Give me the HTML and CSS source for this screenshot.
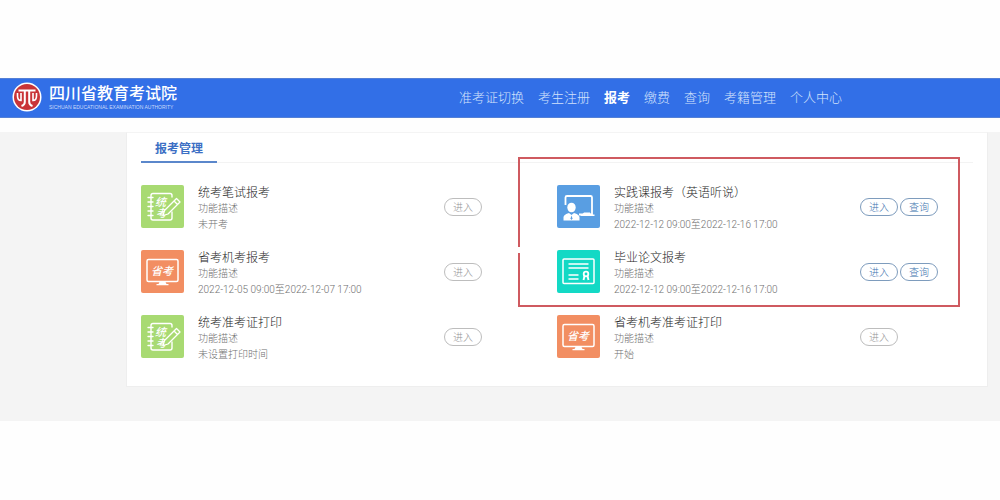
FILE: index.html
```html
<!DOCTYPE html>
<html lang="zh-CN">
<head>
<meta charset="utf-8">
<title>四川省教育考试院</title>
<link rel="stylesheet" href="styles.css">
</head>
<body>
<svg class="sprite" aria-hidden="true">
  <symbol id="notebook" viewBox="0 0 43 43">
    <g fill="none" stroke="#fff" stroke-width="1.4" stroke-linecap="round" stroke-linejoin="round">
      <path d="M31 12V10.500Q31 8.500 29 8.500H12Q10 8.500 10 10.500V33Q10 35 12 35H29Q31 35 31 33V27"/>
      <path d="M7 12.500h5M7 17h5M7 21.500h5M7 26h5M7 30.500h5"/>
    </g>
    <g class="script-text"><text x="14" y="21" font-size="11">统</text><text x="15" y="32" font-size="11">考</text></g>
    <path fill="#a8da72" stroke="#fff" stroke-width="1.300" stroke-linejoin="round" d="M35.500 13.500l3.500 3.500-12 12-5 1.500 1.500-5zM33 16l3.500 3.500"/>
  </symbol>
  <symbol id="monitor" viewBox="0 0 43 43">
    <rect x="6" y="9.500" width="31" height="22" rx="1.500" fill="none" stroke="#fff" stroke-width="1.500"/>
    <path fill="#fff" d="M18.500 32h6l1 2h2v1.200h-12V34h2z"/>
    <g class="script-text"><text x="10" y="25" font-size="11">省考</text></g>
  </symbol>
  <symbol id="teacher" viewBox="0 0 43 43">
    <path d="M8.500 20V12.500Q8.500 11 10 11H33.500Q35 11 35 12.500V29.500H22" fill="none" stroke="#fff" stroke-width="1.800"/>
    <path d="M25 29.500l2-2h6l1 2h3.500V31H23z" fill="#fff"/>
    <ellipse cx="14.500" cy="22.500" rx="4.200" ry="4.800" fill="#fff"/>
    <path d="M6.500 35.500V32Q7 29.500 12 28L14.500 30 17 28Q22 29.500 22.500 32v3.500z" fill="#fff"/>
    <path d="M14.500 30.500l-1 3 1 1.500 1-1.500z" fill="#599ee2"/>
  </symbol>
  <symbol id="certificate" viewBox="0 0 43 43">
    <g fill="none" stroke="#fff" stroke-width="1.500">
      <rect x="6" y="9" width="31" height="24.500" rx="1"/>
      <path d="M11.500 14h20M11.500 18h20M11.500 25h10M11.500 29h10"/>
      <circle cx="29" cy="24" r="2.300" stroke-width="1.800"/>
      <path d="M27.500 26l-1 4M30.500 26l1 4" stroke-width="1.900"/>
    </g>
  </symbol>
</svg>

<header class="topbar">
  <a class="brand" href="#">
    <svg class="brand-mark" viewBox="0 0 30 30" aria-hidden="true">
      <circle cx="15" cy="15" r="14.500" fill="#fff"/>
      <circle cx="15" cy="15" r="13" fill="#c93438"/>
      <g fill="none" stroke="#fff" stroke-width="2">
        <path d="M6.500 8.500H23.500"/>
        <path d="M5.500 11V14Q5.500 18.500 9 18.500V11M24.500 11V14Q24.500 18.500 21 18.500V11" stroke-width="1.600"/>
        <path d="M12.800 9V20Q12.800 23 9.500 24M17.200 9V20Q17.200 23 20.500 24"/>
      </g>
    </svg>
    <span class="brand-text">
      <span class="brand-name">四川省教育考试院</span>
      <span class="brand-sub">SICHUAN EDUCATIONAL EXAMINATION AUTHORITY</span>
    </span>
  </a>
  <nav class="menu">
    <a href="#">准考证切换</a>
    <a href="#">考生注册</a>
    <a class="current" href="#">报考</a>
    <a href="#">缴费</a>
    <a href="#">查询</a>
    <a href="#">考籍管理</a>
    <a href="#">个人中心</a>
  </nav>
</header>

<main class="page">
  <section class="panel">
    <div class="tabs"><h1 class="tab">报考管理</h1></div>
    <div class="grid">
      <article class="item">
        <svg class="icon green"><use href="#notebook"/></svg>
        <div class="info"><h2>统考笔试报考</h2><p>功能描述</p><p>未开考</p></div>
        <div class="actions"><button class="off" type="button">进入</button></div>
      </article>
      <article class="item">
        <svg class="icon blue"><use href="#teacher"/></svg>
        <div class="info"><h2>实践课报考（英语听说）</h2><p>功能描述</p><p>2022-12-12 09:00至2022-12-16 17:00</p></div>
        <div class="actions"><button type="button">进入</button><button type="button">查询</button></div>
      </article>
      <article class="item">
        <svg class="icon orange"><use href="#monitor"/></svg>
        <div class="info"><h2>省考机考报考</h2><p>功能描述</p><p>2022-12-05 09:00至2022-12-07 17:00</p></div>
        <div class="actions"><button class="off" type="button">进入</button></div>
      </article>
      <article class="item">
        <svg class="icon teal"><use href="#certificate"/></svg>
        <div class="info"><h2>毕业论文报考</h2><p>功能描述</p><p>2022-12-12 09:00至2022-12-16 17:00</p></div>
        <div class="actions"><button type="button">进入</button><button type="button">查询</button></div>
      </article>
      <article class="item">
        <svg class="icon green"><use href="#notebook"/></svg>
        <div class="info"><h2>统考准考证打印</h2><p>功能描述</p><p>未设置打印时间</p></div>
        <div class="actions"><button class="off" type="button">进入</button></div>
      </article>
      <article class="item">
        <svg class="icon orange"><use href="#monitor"/></svg>
        <div class="info"><h2>省考机考准考证打印</h2><p>功能描述</p><p>开始</p></div>
        <div class="actions"><button class="off" type="button">进入</button></div>
      </article>
      <div class="highlight"></div>
    </div>
  </section>
</main>
</body>
</html>
```
FILE: styles.css
```css
* {
  box-sizing: border-box;
}

body {
  margin: 0;
  padding-top: 78px;
  background: #fefefe;
  font-family: "Noto Sans CJK SC", sans-serif;
}

a {
  color: inherit;
  text-decoration: none;
}

h1,
h2,
p {
  margin: 0;
}

.sprite {
  display: none;
}

.topbar {
  display: flex;
  align-items: center;
  justify-content: space-between;
  min-height: 40px;
  padding: 0 158px 2px 12px;
  border: solid #5480d6;
  border-width: 1px 0;
  background: #326fe7;
  color: #fff;
}

.brand {
  display: flex;
  align-items: center;
  gap: 7px;
}

.brand-mark {
  width: 30px;
  height: 30px;
}

.brand-text {
  display: flex;
  flex-direction: column;
  padding-bottom: 4px;
}

.brand-name {
  font-size: 16px;
  font-weight: 500;
  line-height: 24px;
}

.brand-sub {
  font: 5px/6px "Liberation Sans", sans-serif;
  color: #c9dafa;
}

.menu {
  display: flex;
  gap: 14px;
  font-size: 13px;
  font-weight: 300;
  line-height: 20px;
  color: #d3e2fc;
}

.menu .current {
  color: #fff;
  font-weight: 700;
}

.page {
  margin-top: 14px;
  padding: 0 12px 34px 126px;
  background: #f4f4f4;
}

.panel {
  padding: 0 14px 28px;
  border: 1px solid #eee;
  border-top-color: #f4f4f4;
  background: #fff;
}

.tabs {
  display: flex;
  border-bottom: 1px solid #f3f3f3;
}

.tab {
  margin-bottom: -1px;
  padding: 5px 14px 3px;
  border-bottom: 2px solid #5b87cb;
  color: #3c6fc4;
  font-size: 12px;
  line-height: 20px;
}

.grid {
  position: relative;
  display: grid;
  grid-template-columns: 1fr 1fr;
  row-gap: 22px;
  padding-top: 22px;
}

.item {
  display: flex;
  align-items: center;
}

.icon {
  flex: none;
  width: 43px;
  height: 43px;
  margin-right: 14px;
  border-radius: 2px;
}

.green { background: #a8da72; }
.blue { background: #599ee2; }
.orange { background: #f28e62; }
.teal { background: #13d9c5; }

.script-text {
  fill: #fff;
  font-weight: 500;
  font-style: italic;
}

.info {
  flex: 1;
  display: flex;
  flex-direction: column;
  padding-top: 2px;
  color: #707070;
  font-family: Roboto, "Noto Sans CJK SC", sans-serif;
  font-size: 10px;
  font-weight: 300;
  line-height: 15px;
  white-space: nowrap;
}

.info h2 {
  color: #262626;
  font-size: 12px;
  font-weight: 300;
  line-height: 13px;
  margin-bottom: 1px;
}

.info p + p {
  padding-top: 1px;
  margin-bottom: -4px;
}

.actions {
  flex: none;
  display: flex;
  gap: 2px;
  width: 113px;
}

button {
  width: 38px;
  height: 18px;
  padding: 0;
  border: 1px solid #7e9cbd;
  border-radius: 9px;
  background: #fff;
  color: #3a72ae;
  font: 300 10px/14px "Noto Sans CJK SC", sans-serif;
}

button.off {
  border-color: #bdbdbd;
  color: #949494;
}

/* Frame drawn over the two right-hand entries open for registration */
.highlight {
  position: absolute;
  top: -6px;
  right: 13px;
  bottom: 51px;
  left: calc(50% - 39px);
  border: 2px solid #cf5a60;
  pointer-events: none;
}

.highlight::before {
  content: "";
  position: absolute;
  top: 88px;
  left: -2px;
  width: 2px;
  height: 6px;
  background: #fff;
}
```
